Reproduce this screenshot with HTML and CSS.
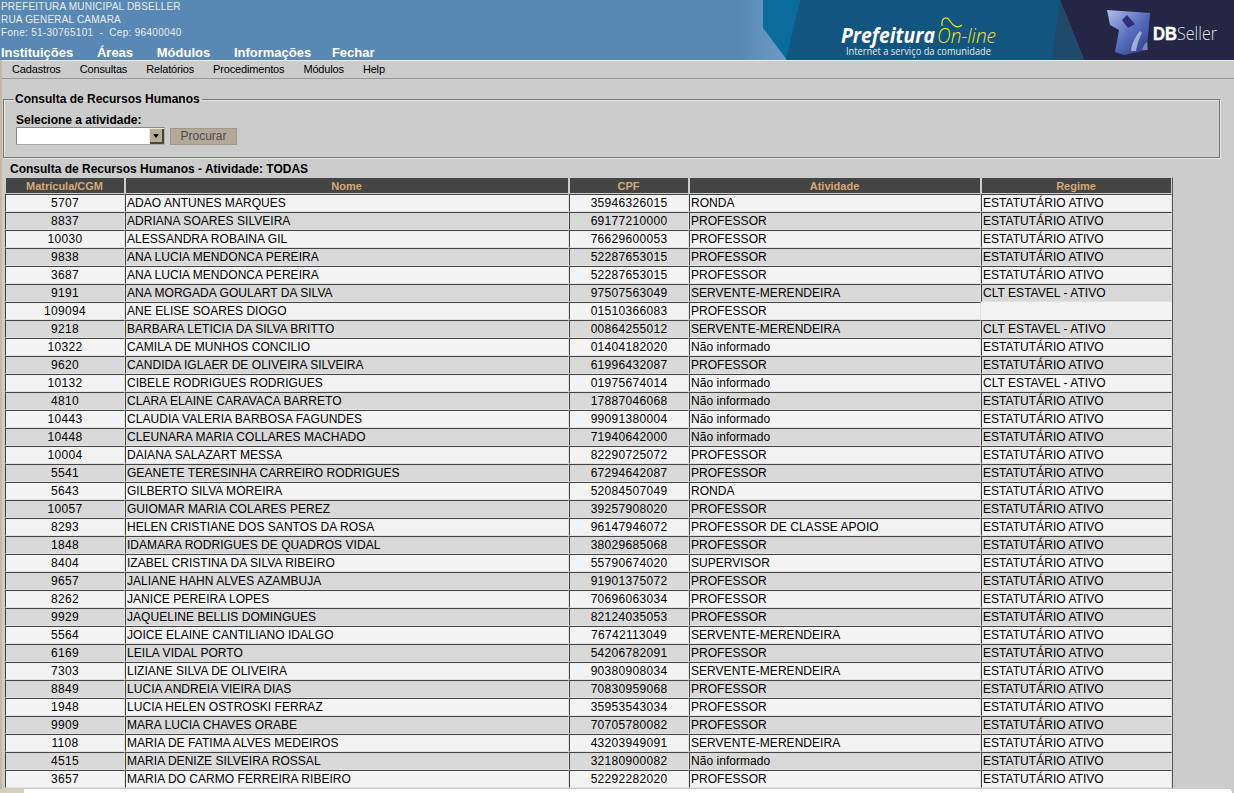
FILE: index.html
```html
<!DOCTYPE html>
<html lang="pt-BR">
<head>
<meta charset="utf-8">
<title>Consulta de Recursos Humanos</title>
<link rel="stylesheet" href="styles.css">
</head>
<body>
<header class="topo">
  <div class="topo-esq">
    <div class="endereco">
      <div>PREFEITURA MUNICIPAL DBSELLER</div>
      <div>RUA GENERAL CAMARA</div>
      <div class="fone">Fone: 51-30765101 &nbsp;-&nbsp; Cep: 96400040</div>
    </div>
    <nav class="nav-principal">
      <a>Instituições</a><a>Áreas</a><a>Módulos</a><a>Informações</a><a>Fechar</a>
    </nav>
  </div>
  <svg class="banner" width="494" height="60" viewBox="740 0 494 60" xmlns="http://www.w3.org/2000/svg" aria-label="Prefeitura On-line">
    <defs>
      <linearGradient id="fade" x1="0" x2="1" y1="0" y2="0">
        <stop offset="0" stop-color="#5a88b5"/>
        <stop offset="1" stop-color="#6d9bc4"/>
      </linearGradient>
      <linearGradient id="cubo" x1="0" x2="1" y1="0" y2="1">
        <stop offset="0" stop-color="#b4bfe8"/>
        <stop offset="0.5" stop-color="#5a70c0"/>
        <stop offset="1" stop-color="#2c3880"/>
      </linearGradient>
      <filter id="suave" x="-10%" y="-10%" width="120%" height="120%">
        <feGaussianBlur stdDeviation="0.6"/>
      </filter>
    </defs>
    <rect x="740" y="0" width="46" height="60" fill="url(#fade)"/>
    <polygon points="763,0 763,28 787,60 800,0" fill="#0a6b9c"/>
    <polygon points="800,0 786,60 1060,60 1060,0" fill="#12557f"/>
    <polygon points="1060,0 1052,60 1084,60" fill="#1f4a6b"/>
    <polygon points="1060,0 1084,60 1234,60 1234,0" fill="#252546"/>
    <path d="M942 26 C941 17 947 16 950 21 C953 26 958 29 962 25" fill="none" stroke="#f2e21d" stroke-width="1.2"/>
    <text x="841" y="43" class="pref" textLength="94" lengthAdjust="spacingAndGlyphs">Prefeitura</text>
    <text x="937" y="43" class="online" textLength="59" lengthAdjust="spacingAndGlyphs">On-line</text>
    <text x="846" y="55" class="tag" textLength="145" lengthAdjust="spacingAndGlyphs">Internet a serviço da comunidade</text>
    <g filter="url(#suave)">
      <polygon points="1107,10 1150,13 1147,50 1124,55 1115,52 1119,30 1110,25" fill="url(#cubo)"/>
      <polygon points="1122,20 1127,15 1135,24 1128,28" fill="#2d2f7e"/>
      <path d="M1131 51 C1132 42 1137 34 1140 31 L1142 33 C1139 38 1137 45 1136 51 Z" fill="#dfe4f6" opacity="0.6"/>
      <path d="M1142 50 C1143 46 1145 43 1147 42 L1148 50 Z" fill="#dfe4f6" opacity="0.4"/>
    </g>
    <text x="1153" y="40" class="db" textLength="24" lengthAdjust="spacingAndGlyphs">DB</text>
    <text x="1177" y="40" class="seller" textLength="40" lengthAdjust="spacingAndGlyphs">Seller</text>
  </svg>
</header>

<nav class="menu">
  <a>Cadastros</a><a>Consultas</a><a>Relatórios</a><a>Procedimentos</a><a>Módulos</a><a>Help</a>
</nav>

<main class="conteudo">
  <fieldset class="filtro">
    <legend>Consulta de Recursos Humanos</legend>
    <label class="rotulo" for="atividade">Selecione a atividade:</label>
    <div class="controles">
      <div class="combo">
        <select id="atividade"><option></option></select>
        <span class="seta"></span>
      </div>
      <button class="procurar" type="button">Procurar</button>
    </div>
  </fieldset>

  <h2 class="titulo">Consulta de Recursos Humanos - Atividade: TODAS</h2>

  <table class="grade">
    <colgroup><col class="c1"><col class="c2"><col class="c3"><col class="c4"><col class="c5"></colgroup>
    <thead>
      <tr><th>Matrícula/CGM</th><th>Nome</th><th>CPF</th><th>Atividade</th><th>Regime</th></tr>
    </thead>
    <tbody>
      <tr><td>5707</td><td>ADAO ANTUNES MARQUES</td><td>35946326015</td><td>RONDA</td><td>ESTATUTÁRIO ATIVO</td></tr>
      <tr><td>8837</td><td>ADRIANA SOARES SILVEIRA</td><td>69177210000</td><td>PROFESSOR</td><td>ESTATUTÁRIO ATIVO</td></tr>
      <tr><td>10030</td><td>ALESSANDRA ROBAINA GIL</td><td>76629600053</td><td>PROFESSOR</td><td>ESTATUTÁRIO ATIVO</td></tr>
      <tr><td>9838</td><td>ANA LUCIA MENDONCA PEREIRA</td><td>52287653015</td><td>PROFESSOR</td><td>ESTATUTÁRIO ATIVO</td></tr>
      <tr><td>3687</td><td>ANA LUCIA MENDONCA PEREIRA</td><td>52287653015</td><td>PROFESSOR</td><td>ESTATUTÁRIO ATIVO</td></tr>
      <tr><td>9191</td><td>ANA MORGADA GOULART DA SILVA</td><td>97507563049</td><td>SERVENTE-MERENDEIRA</td><td>CLT ESTAVEL - ATIVO</td></tr>
      <tr><td>109094</td><td>ANE ELISE SOARES DIOGO</td><td>01510366083</td><td>PROFESSOR</td><td></td></tr>
      <tr><td>9218</td><td>BARBARA LETICIA DA SILVA BRITTO</td><td>00864255012</td><td>SERVENTE-MERENDEIRA</td><td>CLT ESTAVEL - ATIVO</td></tr>
      <tr><td>10322</td><td>CAMILA DE MUNHOS CONCILIO</td><td>01404182020</td><td>Não informado</td><td>ESTATUTÁRIO ATIVO</td></tr>
      <tr><td>9620</td><td>CANDIDA IGLAER DE OLIVEIRA SILVEIRA</td><td>61996432087</td><td>PROFESSOR</td><td>ESTATUTÁRIO ATIVO</td></tr>
      <tr><td>10132</td><td>CIBELE RODRIGUES RODRIGUES</td><td>01975674014</td><td>Não informado</td><td>CLT ESTAVEL - ATIVO</td></tr>
      <tr><td>4810</td><td>CLARA ELAINE CARAVACA BARRETO</td><td>17887046068</td><td>Não informado</td><td>ESTATUTÁRIO ATIVO</td></tr>
      <tr><td>10443</td><td>CLAUDIA VALERIA BARBOSA FAGUNDES</td><td>99091380004</td><td>Não informado</td><td>ESTATUTÁRIO ATIVO</td></tr>
      <tr><td>10448</td><td>CLEUNARA MARIA COLLARES MACHADO</td><td>71940642000</td><td>Não informado</td><td>ESTATUTÁRIO ATIVO</td></tr>
      <tr><td>10004</td><td>DAIANA SALAZART MESSA</td><td>82290725072</td><td>PROFESSOR</td><td>ESTATUTÁRIO ATIVO</td></tr>
      <tr><td>5541</td><td>GEANETE TERESINHA CARREIRO RODRIGUES</td><td>67294642087</td><td>PROFESSOR</td><td>ESTATUTÁRIO ATIVO</td></tr>
      <tr><td>5643</td><td>GILBERTO SILVA MOREIRA</td><td>52084507049</td><td>RONDA</td><td>ESTATUTÁRIO ATIVO</td></tr>
      <tr><td>10057</td><td>GUIOMAR MARIA COLARES PEREZ</td><td>39257908020</td><td>PROFESSOR</td><td>ESTATUTÁRIO ATIVO</td></tr>
      <tr><td>8293</td><td>HELEN CRISTIANE DOS SANTOS DA ROSA</td><td>96147946072</td><td>PROFESSOR DE CLASSE APOIO</td><td>ESTATUTÁRIO ATIVO</td></tr>
      <tr><td>1848</td><td>IDAMARA RODRIGUES DE QUADROS VIDAL</td><td>38029685068</td><td>PROFESSOR</td><td>ESTATUTÁRIO ATIVO</td></tr>
      <tr><td>8404</td><td>IZABEL CRISTINA DA SILVA RIBEIRO</td><td>55790674020</td><td>SUPERVISOR</td><td>ESTATUTÁRIO ATIVO</td></tr>
      <tr><td>9657</td><td>JALIANE HAHN ALVES AZAMBUJA</td><td>91901375072</td><td>PROFESSOR</td><td>ESTATUTÁRIO ATIVO</td></tr>
      <tr><td>8262</td><td>JANICE PEREIRA LOPES</td><td>70696063034</td><td>PROFESSOR</td><td>ESTATUTÁRIO ATIVO</td></tr>
      <tr><td>9929</td><td>JAQUELINE BELLIS DOMINGUES</td><td>82124035053</td><td>PROFESSOR</td><td>ESTATUTÁRIO ATIVO</td></tr>
      <tr><td>5564</td><td>JOICE ELAINE CANTILIANO IDALGO</td><td>76742113049</td><td>SERVENTE-MERENDEIRA</td><td>ESTATUTÁRIO ATIVO</td></tr>
      <tr><td>6169</td><td>LEILA VIDAL PORTO</td><td>54206782091</td><td>PROFESSOR</td><td>ESTATUTÁRIO ATIVO</td></tr>
      <tr><td>7303</td><td>LIZIANE SILVA DE OLIVEIRA</td><td>90380908034</td><td>SERVENTE-MERENDEIRA</td><td>ESTATUTÁRIO ATIVO</td></tr>
      <tr><td>8849</td><td>LUCIA ANDREIA VIEIRA DIAS</td><td>70830959068</td><td>PROFESSOR</td><td>ESTATUTÁRIO ATIVO</td></tr>
      <tr><td>1948</td><td>LUCIA HELEN OSTROSKI FERRAZ</td><td>35953543034</td><td>PROFESSOR</td><td>ESTATUTÁRIO ATIVO</td></tr>
      <tr><td>9909</td><td>MARA LUCIA CHAVES ORABE</td><td>70705780082</td><td>PROFESSOR</td><td>ESTATUTÁRIO ATIVO</td></tr>
      <tr><td>1108</td><td>MARIA DE FATIMA ALVES MEDEIROS</td><td>43203949091</td><td>SERVENTE-MERENDEIRA</td><td>ESTATUTÁRIO ATIVO</td></tr>
      <tr><td>4515</td><td>MARIA DENIZE SILVEIRA ROSSAL</td><td>32180900082</td><td>Não informado</td><td>ESTATUTÁRIO ATIVO</td></tr>
      <tr><td>3657</td><td>MARIA DO CARMO FERREIRA RIBEIRO</td><td>52292282020</td><td>PROFESSOR</td><td>ESTATUTÁRIO ATIVO</td></tr>
    </tbody>
  </table>
</main>
<div class="rodape"></div>
</body>
</html>
```

FILE: styles.css
```css
html, body {
  margin: 0;
  height: 793px;
  overflow: hidden;
}
body {
  position: relative;
  background: #cccccc;
  font-family: "Liberation Sans", Arial, sans-serif;
  font-size: 12px;
  color: #000;
}
.topo {
  display: flex;
  justify-content: space-between;
  height: 60px;
  background: #5a88b5;
  overflow: hidden;
}
.topo-esq { padding-left: 1px; }
.endereco {
  font-size: 10px;
  line-height: 13px;
  color: #e8edf3;
  letter-spacing: 0.2px;
}
.endereco .fone { letter-spacing: 0.3px; }
.nav-principal {
  display: flex;
  gap: 23.7px;
  margin-top: 6px;
  font-size: 13px;
  font-weight: bold;
  line-height: 15px;
  color: #fff;
  white-space: nowrap;
}
.nav-principal a:last-child { margin-left: -3px; }
.banner { flex: none; display: block; }
.pref {
  font-family: "Open Sans", sans-serif;
  font-weight: 700;
  font-style: italic;
  font-size: 21px;
  fill: #fff;
}
.online {
  font-family: "Open Sans", sans-serif;
  font-weight: 300;
  font-style: italic;
  font-size: 21px;
  fill: #f2e21d;
}
.tag {
  font-family: "Open Sans", sans-serif;
  font-size: 10px;
  fill: #e4ebf0;
}
.db {
  font-family: "Liberation Sans", sans-serif;
  font-weight: 700;
  font-size: 18px;
  fill: #fff;
  stroke: #fff;
  stroke-width: 0.4;
}
.seller {
  font-family: "Open Sans", sans-serif;
  font-weight: 300;
  font-size: 18px;
  fill: #dfe2ea;
}
.menu {
  display: flex;
  gap: 19px;
  height: 17px;
  padding-left: 12px;
  background: #cccccc;
  border-top: 1px solid #eeeeee;
  border-bottom: 1px solid #999999;
  font-size: 11px;
  line-height: 16px;
  letter-spacing: -0.16px;
  color: #000;
}
.conteudo { padding-top: 13px; }
.filtro {
  box-sizing: border-box;
  margin: 0 14px 0 3px;
  padding: 0 0 0 12px;
  height: 66px;
  border: 1px solid #7c7868;
  box-shadow: 1px 1px 0 #e6e6e6, inset 1px 1px 0 #e6e6e6;
}
.filtro legend {
  padding: 0 2px 0 1px;
  margin-left: -2px;
  font-size: 12px;
  font-weight: bold;
  line-height: 14px;
}
.rotulo {
  display: block;
  margin-top: 7px;
  font-weight: bold;
  line-height: 14px;
}
.controles {
  display: flex;
  align-items: flex-start;
  gap: 5px;
}
.combo {
  display: flex;
  box-sizing: border-box;
  width: 149px;
  height: 18px;
  background: #fff;
  border: 1px solid;
  border-color: #888 #aaa #aaa #888;
}
.combo select {
  flex: 1;
  min-width: 0;
  appearance: none;
  border: 0;
  padding: 0;
  background: #fff;
  height: 16px;
}
.seta {
  position: relative;
  flex: none;
  width: 15px;
  background: #b7ad9b;
  box-shadow: inset 1px 1px 0 #efece4, inset -2px -2px 0 #4a473e;
}
.seta::after {
  content: "";
  position: absolute;
  left: 4px;
  top: 6px;
  border-style: solid;
  border-width: 4px 3.5px 0;
  border-color: #000 transparent transparent;
}
.procurar {
  box-sizing: border-box;
  width: 67px;
  height: 17px;
  margin-top: 1px;
  padding: 0;
  background: #b3a999;
  border: 1px solid #a19a8b;
  color: #4f4c46;
  font-family: "Liberation Sans", Arial, sans-serif;
  font-size: 12px;
  line-height: 15px;
}
.titulo {
  margin: 4px 0 1px 10px;
  font-size: 12px;
  font-weight: bold;
  line-height: 14px;
}
.grade {
  box-sizing: border-box;
  table-layout: fixed;
  border-collapse: separate;
  border-spacing: 0;
  empty-cells: hide;
  width: 1168px;
  margin-left: 5px;
  border-right: 1px solid #555;
  border-top: 1px solid transparent;
  font-size: 12px;
}
.c1 { width: 120px; }
.c2 { width: 444px; }
.c3 { width: 120px; }
.c4 { width: 292px; }
.c5 { width: 191px; }
.grade th {
  box-sizing: border-box;
  height: 16px;
  padding: 0 1px 0 0;
  background: #444444;
  border: 1px solid #cccccc;
  border-top: 0;
  color: #d4a878;
  font-size: 11px;
  font-weight: bold;
  line-height: 14px;
  text-align: center;
}
.grade td {
  box-sizing: border-box;
  height: 18px;
  padding: 0 0 0 1px;
  border-top: 1px solid #444;
  border-left: 1px solid #444;
  border-bottom: 1px solid #e2e2e2;
  border-right: 1px solid #e2e2e2;
  letter-spacing: 0.04px;
  line-height: 16px;
  white-space: nowrap;
  overflow: hidden;
}
.grade td:nth-child(1),
.grade td:nth-child(3) {
  padding: 0;
  text-align: center;
  letter-spacing: 0.3px;
}
.grade tbody tr:nth-child(odd) { background: #f3f3f3; }
.grade tbody tr:nth-child(even) { background: #d9d9d9; }
.rodape {
  position: absolute;
  left: 22px;
  right: 2px;
  bottom: 0;
  height: 4px;
  background: #fff;
  border-radius: 4px 4px 0 0;
}
body::before {
  content: "";
  position: absolute;
  left: 0;
  top: 60px;
  bottom: 0;
  width: 2px;
  background: #c2baa6;
}
body::after {
  content: "";
  position: absolute;
  left: 0;
  bottom: 0;
  width: 24px;
  height: 4px;
  background: #d8cfb8;
}
```
